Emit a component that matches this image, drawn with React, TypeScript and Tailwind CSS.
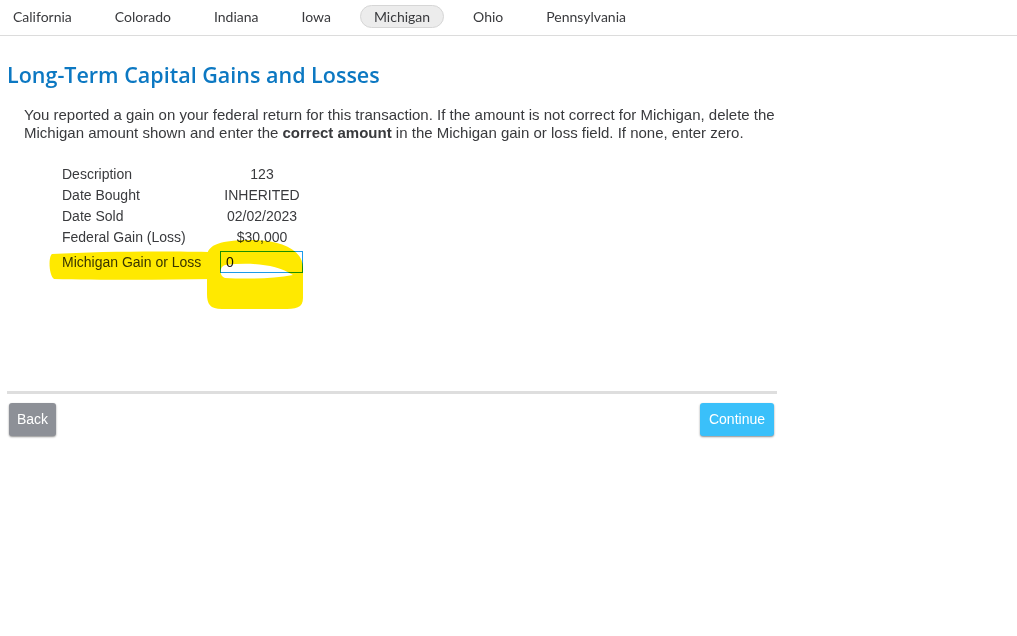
export default function App() {
  const tabs = ["California", "Colorado", "Indiana", "Iowa", "Michigan", "Ohio", "Pennsylvania"];
  const rows: [string, string][] = [
    ["Description", "123"],
    ["Date Bought", "INHERITED"],
    ["Date Sold", "02/02/2023"],
    ["Federal Gain (Loss)", "$30,000"],
  ];

  return (
    <div className="relative w-[1017px] h-[636px] bg-white overflow-hidden">
      {/* State tabs */}
      <nav className="flex items-start pt-[5px] h-[36px] border-b border-[#dcdcdc] gap-[15px] -ml-px font-['Lato',sans-serif] text-[14px] text-[#393a3d]">
        {tabs.map((t) => (
          <span
            key={t}
            className={
              t === "Michigan"
                ? "px-[13px] h-[23px] flex items-center rounded-full bg-[#ececec] border border-[#d6d6d6]"
                : "px-[13px] h-[23px] flex items-center border border-transparent"
            }
          >
            {t}
          </span>
        ))}
      </nav>

      <div className="w-[770px] ml-[7px]">
        <h1 className="mt-[26px] text-[21.5px] leading-[26px] font-semibold text-[#0c78c2] font-['Open_Sans',sans-serif]">
          Long-Term Capital Gains and Losses
        </h1>

        <p className="mt-[18px] ml-[17px] text-[15px] leading-[18px] text-[#393a3d] font-['Liberation_Sans',Arial,sans-serif]">
          You reported a gain on your federal return for this transaction. If the amount is not correct for Michigan, delete the
          Michigan amount shown and enter the <b className="font-bold">correct amount</b> in the Michigan gain or loss field. If none, enter zero.
        </p>

        <table className="mt-[22px] ml-[55px] text-[14px] text-[#393a3d] font-['Liberation_Sans',Arial,sans-serif] border-collapse">
          <tbody>
            {rows.map(([k, v]) => (
              <tr key={k} className="h-[21px]">
                <td className="w-[158px] p-0">{k}</td>
                <td className="w-[84px] p-0 text-center">{v}</td>
              </tr>
            ))}
            <tr className="h-[27px]">
              <td className="p-0 pt-[1px]">Michigan Gain or Loss</td>
              <td className="p-0 pt-[1px]">
                <div className="w-[83px] h-[22px] border border-[#1c9bea] bg-white flex items-center px-[5px] text-[#111]">
                  0
                </div>
              </td>
            </tr>
          </tbody>
        </table>

        <div className="mt-[116px] h-[3px] bg-[#dedede]" />

        <div className="flex justify-between mt-[9px] font-['Liberation_Sans',Arial,sans-serif] text-[14px] text-white">
          <button className="ml-[2px] w-[47px] h-[33px] rounded-[3px] bg-[#8d9097] shadow-[0_1px_2px_rgba(0,0,0,0.45)]">
            Back
          </button>
          <button className="mr-[3px] w-[74px] h-[33px] rounded-[3px] bg-[#3ac0fa] shadow-[0_1px_2px_rgba(0,0,0,0.45)]">
            Continue
          </button>
        </div>
      </div>

      {/* freehand yellow highlighter annotation */}
      <svg
        className="absolute left-0 top-0 pointer-events-none mix-blend-multiply"
        width="1017"
        height="636"
        viewBox="0 0 1017 636"
      >
        <path
          d="M52,254 C100,251 170,251 214,252 L214,279 C160,280 100,280 54,279 C49,276 48,257 52,254 Z"
          fill="#ffe900"
        />
        <path
          fillRule="evenodd"
          d="M207,258 C206,245 220,240 250,240 C282,240 303,250 303,268 L303,298 C303,308 296,309 282,309 L222,309 C210,309 207,304 207,294 Z M225,265 C250,262 276,264 293,275 C272,279 244,279 225,278 C219,276 219,267 225,265 Z"
          fill="#ffe900"
        />
      </svg>
    </div>
  );
}
